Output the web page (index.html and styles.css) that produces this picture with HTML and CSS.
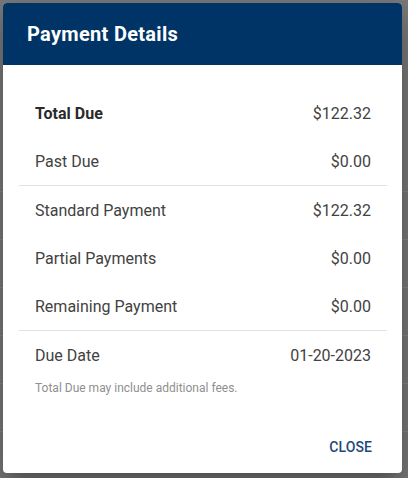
FILE: index.html
```html
<!DOCTYPE html>
<html lang="en">
<head>
<meta charset="utf-8">
<title>Payment Details</title>
<link rel="stylesheet" href="styles.css">
</head>
<body>
<div class="backdrop-page">
  <div class="bg-row"></div>
  <div class="bg-row"></div>
  <div class="bg-row"></div>
  <div class="bg-row"></div>
  <div class="bg-row"></div>
  <div class="bg-row"></div>
</div>
<div class="dialog" role="dialog" aria-labelledby="dlg-title">
  <div class="dialog-header">
    <h2 id="dlg-title" class="dialog-title">Payment Details</h2>
  </div>
  <div class="dialog-body">
    <div class="row"><span class="label strong">Total Due</span><span class="value">$122.32</span></div>
    <div class="row"><span class="label">Past Due</span><span class="value">$0.00</span></div>
    <div class="divider"></div>
    <div class="row"><span class="label">Standard Payment</span><span class="value">$122.32</span></div>
    <div class="row"><span class="label">Partial Payments</span><span class="value">$0.00</span></div>
    <div class="row"><span class="label">Remaining Payment</span><span class="value">$0.00</span></div>
    <div class="divider"></div>
    <div class="row"><span class="label">Due Date</span><span class="value">01-20-2023</span></div>
    <p class="note">Total Due may include additional fees.</p>
  </div>
  <div class="dialog-actions">
    <button class="btn-text" type="button">CLOSE</button>
  </div>
</div>
</body>
</html>
```
FILE: styles.css
```css
* { box-sizing: border-box; }
html, body { height: 100%; }
body {
  margin: 0;
  background: #7a7a7a;
  font-family: Roboto, "Liberation Sans", sans-serif;
  overflow: hidden;
}
.backdrop-page {
  display: flex;
  flex-direction: column;
  padding-top: 144px;
}
.bg-row {
  height: 48px;
  border-bottom: 1px solid #878787;
}
.dialog {
  position: absolute;
  left: 3px;
  top: 3px;
  width: 399px;
  height: 470px;
  background: #fff;
  border-radius: 4px;
  overflow: hidden;
  display: flex;
  flex-direction: column;
  box-shadow: 0 11px 15px -7px rgba(0,0,0,0.2), 0 24px 38px 3px rgba(0,0,0,0.14), 0 9px 46px 8px rgba(0,0,0,0.12);
}
.dialog-header {
  background: #003466;
  height: 62px;
  padding: 0 24px;
  display: flex;
  align-items: center;
}
.dialog-title {
  margin: 0;
  color: #fff;
  font-size: 20px;
  font-weight: 700;
  line-height: 32px;
  letter-spacing: 0.3px;
}
.dialog-body {
  padding: 24px 15px 0 16px;
  display: flex;
  flex-direction: column;
}
.row {
  height: 48px;
  padding: 0 16px;
  display: flex;
  align-items: center;
  justify-content: space-between;
  font-size: 16px;
  color: #424242;
}
.label.strong { font-weight: 700; color: #2a2a2a; }
.divider {
  height: 1px;
  background: #e2e2e2;
}
.note {
  margin: 0;
  padding: 0 16px;
  font-size: 12px;
  line-height: 18px;
  color: #8f8f8f;
}
.dialog-actions {
  flex: 1;
  display: flex;
  justify-content: flex-end;
  align-items: flex-end;
  padding: 8px 15px 8px 8px;
}
.btn-text {
  height: 36px;
  padding: 0 8px;
  border: 0;
  background: transparent;
  font-family: Roboto, "Liberation Sans", sans-serif;
  font-size: 14px;
  font-weight: 500;
  letter-spacing: 0.1px;
  color: #1d4a7a;
  border-radius: 4px;
  margin-right: 7px;
}
```
